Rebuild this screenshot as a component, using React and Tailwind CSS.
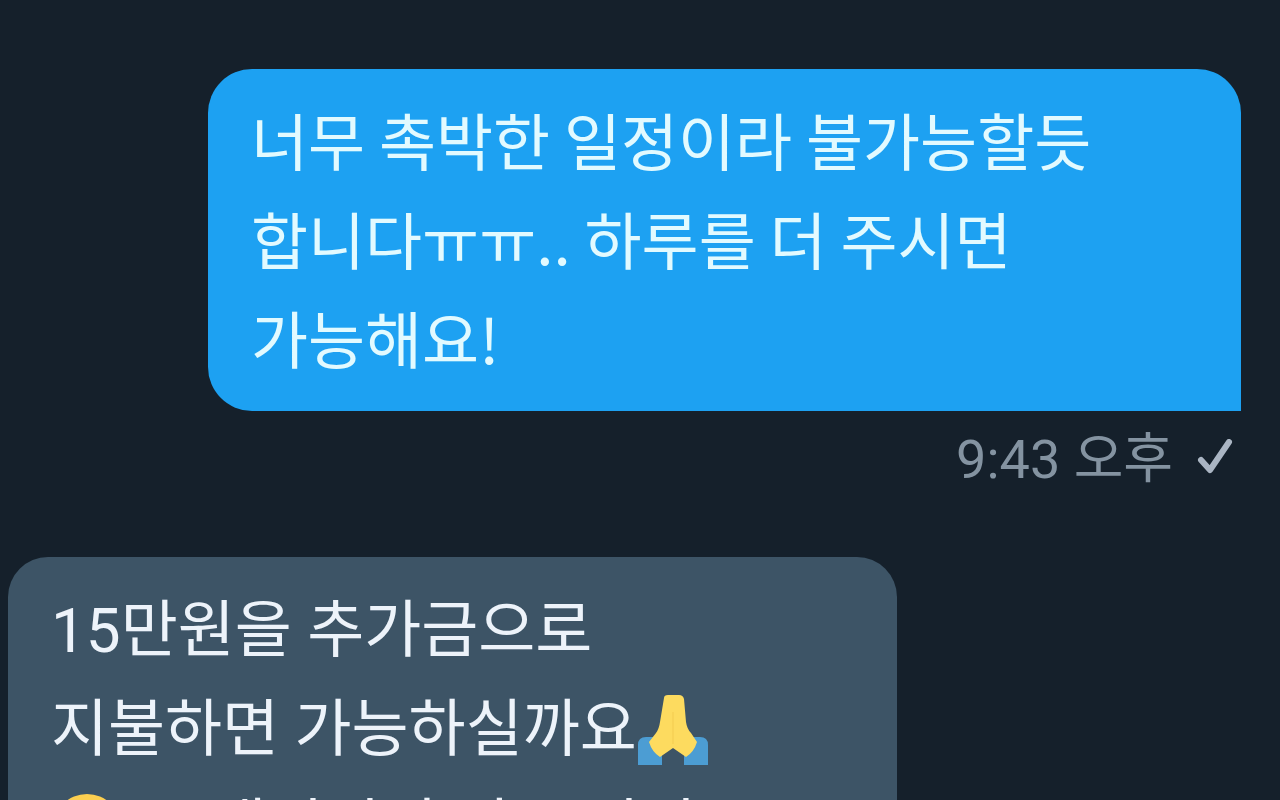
function FoldedHands() {
  return (
    <svg className="h-[72px] w-[72px]" viewBox="0 0 72 72" role="img" aria-label="두 손 모음">
      <path d="M1 71V51q0-8 8-8h16v28zM71 71V51q0-8-8-8H47v28z" fill="#4c9dd3" />
      <path
        d="M27 4q0-3 4-3h11q4 0 5 4l2 23q1 7 5 11l6 9q-3 10-11 15L36 54 23 63q-8-5-11-15l7-9q3-4 4-11z"
        fill="#fddb5f"
      />
      <path d="M36 18v32" stroke="#f8d357" strokeWidth="2" fill="none" />
    </svg>
  );
}

function CryingFace() {
  return (
    <svg className="h-[72px] w-[72px]" viewBox="0 0 72 72" role="img" aria-label="우는 얼굴">
      <circle cx="36" cy="35" r="34" fill="#fccf50" />
      <circle cx="25" cy="34" r="4" fill="#5d4520" />
      <circle cx="47" cy="34" r="4" fill="#5d4520" />
      <path d="M26 54q10-9 20 0" stroke="#5d4520" strokeWidth="3" fill="none" />
      <path d="M22 42q-8 12 0 14q8-2 0-14z" fill="#4c9dd3" />
    </svg>
  );
}

export default function App() {
  return (
    <main className="h-screen overflow-hidden bg-[#15202b] pt-[69px] font-['Roboto','Noto_Sans_CJK_KR',sans-serif] text-[62px] leading-[99px]">
      <section className="mr-[39px] ml-[208px]">
        <p className="rounded-t-[44px] rounded-bl-[44px] bg-[#1da1f2] pt-[21px] pr-20 pb-6 pl-[43px] font-['Noto_Sans_CJK_KR',sans-serif] text-[#e2faff]">
          너무 촉박한 일정이라 불가능할듯<br />
          합니다ㅠㅠ.. 하루를 더 주시면<br />
          가능해요!
        </p>
        <footer className="flex h-24 items-center justify-end gap-6 pr-2 text-[54px] text-[#8493a1]">
          <time>9:43 오후</time>
          <svg className="h-10 w-9" viewBox="0 0 36 40" fill="none" stroke="#aab5c3" strokeWidth="6" strokeLinecap="round" strokeLinejoin="round" role="img" aria-label="전송됨">
            <path d="M4 21 L13 31 L32 3" />
          </svg>
        </footer>
      </section>
      <section className="mt-[50px] ml-2 w-[889px] max-w-full rounded-t-[40px] bg-[#3d5466] pt-6 pl-[43px] text-[#edf3fa]">
        <p>15만원을 추가금으로</p>
        <p className="flex items-center">
          지불하면 가능하실까요
          <FoldedHands />
        </p>
        <p className="flex items-center gap-[14px]">
          <CryingFace />
          그 내일이니 지금 일이
        </p>
      </section>
    </main>
  );
}
